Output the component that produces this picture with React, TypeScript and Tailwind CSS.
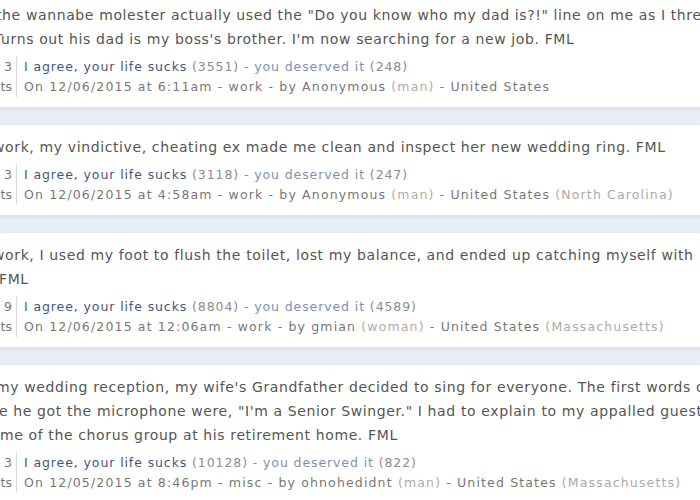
const posts = [
  {
    lines: [
      { t: 'the wannabe molester actually used the "Do you know who my dad is?!" line on me as I threw', c: "-ml-[4px]" },
      { t: "Turns out his dad is my boss's brother. I'm now searching for a new job. FML", c: "-ml-[6px]" },
    ],
    votes: "3",
    agree: "3551",
    deserved: "248",
    when: "12/06/2015 at 6:11am",
    cat: "work",
    author: "Anonymous",
    gender: "man",
    region: "",
  },
  {
    lines: [{ t: "work, my vindictive, cheating ex made me clean and inspect her new wedding ring. FML", c: "-ml-[7px]" }],
    votes: "3",
    agree: "3118",
    deserved: "247",
    when: "12/06/2015 at 4:58am",
    cat: "work",
    author: "Anonymous",
    gender: "man",
    region: "North Carolina",
  },
  {
    lines: [
      { t: "work, I used my foot to flush the toilet, lost my balance, and ended up catching myself with", c: "-ml-[7px]" },
      { t: "FML", c: "-ml-[1px]" },
    ],
    votes: "9",
    agree: "8804",
    deserved: "4589",
    when: "12/06/2015 at 12:06am",
    cat: "work",
    author: "gmian",
    gender: "woman",
    region: "Massachusetts",
  },
  {
    lines: [
      { t: "my wedding reception, my wife's Grandfather decided to sing for everyone. The first words of", c: "-ml-[4px]" },
      { t: 'e he got the microphone were, "I\'m a Senior Swinger." I had to explain to my appalled guests', c: "-ml-[1px]" },
      { t: "me of the chorus group at his retirement home. FML", c: "ml-0" },
    ],
    votes: "3",
    agree: "10128",
    deserved: "822",
    when: "12/05/2015 at 8:46pm",
    cat: "misc",
    author: "ohnohedidnt",
    gender: "man",
    region: "Massachusetts",
  },
]

function Post({ p }: { p: (typeof posts)[number] }) {
  return (
    <div className="bg-white pt-[10px] pb-[10px] border-b border-[#dde2ea] shadow-[0_1px_3px_rgba(0,0,0,0.08)]">
      <div className="text-[14px] leading-[24px] tracking-[0.62px] text-[#555]">
        {p.lines.map((l, i) => (
          <div key={i} className={`whitespace-nowrap ${l.c}`}>
            {l.t}
          </div>
        ))}
      </div>
      <div className="mt-[6px] flex text-[12.5px] leading-[20px] whitespace-nowrap">
        <div className="w-[17px] shrink-0 pr-[4px] text-right text-[#777] border-r border-[#d8d8d8]">
          <div>{p.votes}</div>
          <div>ts</div>
        </div>
        <div className="pl-[7px]">
          <div className="tracking-[0.9px]">
            <span className="text-[#3f5784]">I agree, your life sucks</span>
            <span className="text-[#8c8c8c]"> ({p.agree})</span>
            <span className="text-[#7d90b4]"> - you deserved it</span>
            <span className="text-[#8c8c8c]"> ({p.deserved})</span>
          </div>
          <div className="tracking-[1.15px] text-[#777]">
            On {p.when} - {p.cat} - by {p.author} <span className="text-[#b3aaa6]">({p.gender})</span> - United States
            {p.region && <span className="text-[#aaa]"> ({p.region})</span>}
          </div>
        </div>
      </div>
    </div>
  )
}

export default function App() {
  return (
    <div className="w-[700px] h-[500px] overflow-hidden bg-[#e8eef8] font-['DejaVu_Sans',sans-serif]">
      <div className="-mt-[7px] flex flex-col gap-[17px]">
        {posts.map((p, i) => (
          <Post key={i} p={p} />
        ))}
      </div>
    </div>
  )
}
